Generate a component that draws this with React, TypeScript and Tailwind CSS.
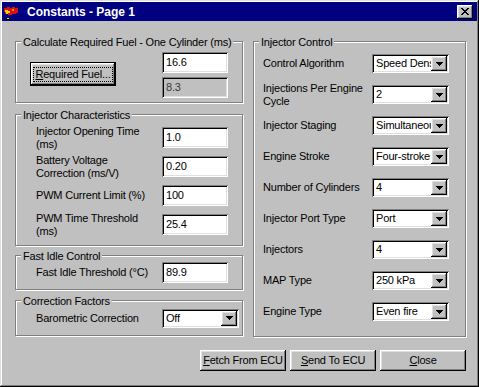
import type { ReactNode } from "react";

const raised =
  "shadow-[inset_-1px_-1px_0_#000,inset_1px_1px_0_#fff,inset_-2px_-2px_0_#808080,inset_2px_2px_0_#dfdfdf]";
const sunken =
  "shadow-[inset_1px_1px_0_#808080,inset_-1px_-1px_0_#fff,inset_2px_2px_0_#000,inset_-2px_-2px_0_#dfdfdf]";

function Group({ title, className, children }: { title: string; className?: string; children?: ReactNode }) {
  return (
    <div
      className={`relative border border-[#808080] shadow-[inset_1px_1px_0_#fff,1px_1px_0_#fff] ${className ?? ""}`}
    >
      <span className="absolute left-[5px] top-[-7px] whitespace-nowrap bg-[#c0c0c0] px-[2px] leading-[14px]">
        {title}
      </span>
      {children}
    </div>
  );
}

function TextBox({ value, disabled }: { value: string; disabled?: boolean }) {
  return (
    <div
      className={`flex h-[21px] w-[66px] items-center p-[2px] ${sunken} ${
        disabled ? "bg-[#c0c0c0] text-[#3a3a3a]" : "bg-white"
      }`}
    >
      <span className="pl-[2px] leading-[15px]">{value}</span>
    </div>
  );
}

function Combo({ value }: { value: string }) {
  return (
    <div className={`flex h-[19px] w-[77px] bg-white p-[2px] ${sunken}`}>
      <div className="flex-1 overflow-hidden whitespace-nowrap pl-[2px] leading-[15px]">{value}</div>
      <div className={`flex w-[16px] items-center justify-center bg-[#c0c0c0] ${raised}`}>
        <svg width="7" height="4" viewBox="0 0 7 4" shapeRendering="crispEdges">
          <path d="M0 0h7v1h-1v1h-1v1h-1v1h-1v-1h-1v-1h-1v-1h-1z" fill="#000" />
        </svg>
      </div>
    </div>
  );
}

function Button({ children, isDefault }: { children: ReactNode; isDefault?: boolean }) {
  if (isDefault) {
    return (
      <div className="h-[24px] w-[86px] border border-black">
        <div className={`flex h-full w-full items-center justify-center bg-[#c0c0c0] ${raised}`}>
          <span className="border border-dotted border-black px-[1px] leading-[13px]">{children}</span>
        </div>
      </div>
    );
  }
  return (
    <div className={`flex h-[21px] w-[86px] items-center justify-center bg-[#c0c0c0] ${raised}`}>
      <span className="leading-[13px]">{children}</span>
    </div>
  );
}

function Row({ label, children }: { label: ReactNode; children: ReactNode }) {
  return (
    <div className="flex h-[29px] items-center">
      <div className="w-[126px] leading-[13px]">{label}</div>
      {children}
    </div>
  );
}

function ControlRow({ label, value }: { label: ReactNode; value: string }) {
  return (
    <div className="flex h-[31px] items-center">
      <div className="w-[109px] leading-[13px]">{label}</div>
      <Combo value={value} />
    </div>
  );
}

function TitleBar() {
  return (
    <div className="flex h-[19px] items-center bg-[#000080] pl-[1px] pr-[4px]">
      <svg width="16" height="18" viewBox="0 0 16 18" shapeRendering="crispEdges">
        <path d="M1 5h3v-1h3v1h2v-1h3v1h3v5h-2v1h-4v1h-4v-1h-3v-2h-1z" fill="#d81010" />
        <path d="M2 7h3v1h2v2h-2v1h-2v-2h-1z" fill="#ffd000" />
        <path d="M9 6h2v2h-2z" fill="#ff8a00" />
        <path d="M3 16h6v1h-6z" fill="#000" />
        <path d="M4 15h2v1h-2z" fill="#ffd000" />
      </svg>
      <span className="ml-[8px] text-[12px] font-bold tracking-normal text-white">Constants - Page 1</span>
      <div className={`ml-auto flex h-[14px] w-[16px] items-center justify-center bg-[#c0c0c0] ${raised}`}>
        <svg width="8" height="7" viewBox="0 0 8 7" shapeRendering="crispEdges">
          <path
            d="M0 0h2v1h1v1h2v-1h1v-1h2v1h-1v1h-1v1h-1v1h1v1h1v1h1v1h-2v-1h-1v-1h-2v1h-1v1h-2v-1h1v-1h1v-1h1v-1h-1v-1h-1v-1h-1z"
            fill="#000"
          />
        </svg>
      </div>
    </div>
  );
}

export default function App() {
  return (
    <div
      className={`flex h-[387px] w-[479px] flex-col bg-[#c0c0c0] p-[2px] font-['Liberation_Sans',Arial,sans-serif] text-[11px] tracking-[-0.2px] text-black shadow-[inset_-1px_-1px_0_#000,inset_1px_1px_0_#dfdfdf,inset_-2px_-2px_0_#808080,inset_2px_2px_0_#fff]`}
    >
      <TitleBar />
      <div className="flex flex-col pl-[13px] pt-[20px]">
        <div className="flex gap-[10px]">
          <div className="flex w-[228px] flex-col">
            <Group title="Calculate Required Fuel - One Cylinder (ms)" className="h-[62px]">
              <div className="flex pl-[14px] pt-[10px]">
                <div className="w-[132px] pt-[10px]">
                  <Button isDefault>
                    <span className="underline">R</span>equired Fuel...
                  </Button>
                </div>
                <div className="flex flex-col gap-[4px]">
                  <TextBox value="16.6" />
                  <TextBox value="8.3" disabled />
                </div>
              </div>
            </Group>

            <Group title="Injector Characteristics" className="mt-[11px] h-[132px]">
              <div className="flex flex-col pl-[20px] pt-[8px]">
                <Row
                  label={
                    <>
                      Injector Opening Time
                      <br />
                      (ms)
                    </>
                  }
                >
                  <TextBox value="1.0" />
                </Row>
                <Row
                  label={
                    <>
                      Battery Voltage
                      <br />
                      Correction (ms/V)
                    </>
                  }
                >
                  <TextBox value="0.20" />
                </Row>
                <Row label="PWM Current Limit (%)">
                  <TextBox value="100" />
                </Row>
                <Row
                  label={
                    <>
                      PWM Time Threshold
                      <br />
                      (ms)
                    </>
                  }
                >
                  <TextBox value="25.4" />
                </Row>
              </div>
            </Group>

            <Group title="Fast Idle Control" className="mt-[9px] h-[35px]">
              <div className="flex h-full items-center pl-[20px]">
                <div className="w-[126px]">Fast Idle Threshold (°C)</div>
                <TextBox value="89.9" />
              </div>
            </Group>

            <Group title="Correction Factors" className="mt-[10px] h-[36px]">
              <div className="flex h-full items-center pl-[20px]">
                <div className="w-[126px]">Barometric Correction</div>
                <Combo value="Off" />
              </div>
            </Group>
          </div>

          <Group title="Injector Control" className="h-[296px] w-[213px]">
            <div className="flex flex-col pl-[9px] pt-[6px]">
              <ControlRow label="Control Algorithm" value="Speed Density" />
              <ControlRow
                label={
                  <>
                    Injections Per Engine
                    <br />
                    Cycle
                  </>
                }
                value="2"
              />
              <ControlRow label="Injector Staging" value="Simultaneous" />
              <ControlRow label="Engine Stroke" value="Four-stroke" />
              <ControlRow label="Number of Cylinders" value="4" />
              <ControlRow label="Injector Port Type" value="Port" />
              <ControlRow label="Injectors" value="4" />
              <ControlRow label="MAP Type" value="250 kPa" />
              <ControlRow label="Engine Type" value="Even fire" />
            </div>
          </Group>
        </div>

        <div className="mt-[13px] flex w-[451px] justify-end gap-[4px]">
          <Button>
            <span className="underline">F</span>etch From ECU
          </Button>
          <Button>
            <span className="underline">S</span>end To ECU
          </Button>
          <Button>
            <span className="underline">C</span>lose
          </Button>
        </div>
      </div>
    </div>
  );
}
